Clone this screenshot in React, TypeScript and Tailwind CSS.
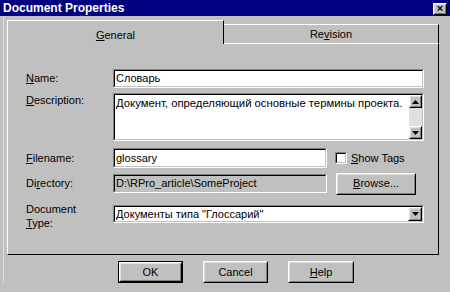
import React from "react";

const font = { fontFamily: '"Liberation Sans", Arial, sans-serif' };

function U({ children }: { children: React.ReactNode }) {
  return <span className="underline underline-offset-[1px]">{children}</span>;
}

function Sunken({ className = "", children }: { className?: string; children?: React.ReactNode }) {
  return (
    <div className={"border border-t-[#808080] border-l-[#808080] border-b-white border-r-white " + className}>
      <div className="h-full w-full border border-t-black border-l-black border-b-[#c0c0c0] border-r-[#c0c0c0] flex items-center">
        {children}
      </div>
    </div>
  );
}

function Raised({ className = "", children }: { className?: string; children?: React.ReactNode }) {
  return (
    <div className={"border border-t-white border-l-white border-b-black border-r-black bg-[#c0c0c0] " + className}>
      <div className="h-full w-full border border-t-[#dfdfdf] border-l-[#dfdfdf] border-b-[#808080] border-r-[#808080] flex items-center justify-center">
        {children}
      </div>
    </div>
  );
}

function Arrow({ down }: { down?: boolean }) {
  return (
    <svg width="7" height="4" viewBox="0 0 7 4">
      {down ? <polygon points="0,0 7,0 3.5,4" fill="#000" /> : <polygon points="0,4 7,4 3.5,0" fill="#000" />}
    </svg>
  );
}

export default function App() {
  return (
    <div className="w-[450px] h-[292px] bg-[#c0c0c0] overflow-hidden text-[11px] text-black leading-none" style={font}>
      {/* title bar */}
      <div className="h-[16px] bg-[#000080] flex items-center justify-between pl-[3px] pr-[3px]">
        <span className="text-white font-bold text-[12px]">Document Properties</span>
        <Raised className="w-[14px] h-[12px] mt-[1px]">
          <span className="text-[11px] font-bold leading-none">×</span>
        </Raised>
      </div>
      <div className="border-l border-l-[#dfdfdf] ml-[3px] pl-[3px] pr-[10px] pt-[4px]">
        {/* tabs */}
        <div className="flex h-[24px]">
          <div className="w-[217px] h-[24px] border-t border-l border-t-white border-l-white border-r border-r-black flex items-center justify-center pt-[5px]">
            <span><U>G</U>eneral</span>
          </div>
          <div className="w-[215px] h-[20px] mt-[4px] border-t border-t-white border-b border-b-white border-r border-r-black flex items-center justify-center pt-[1px]">
            <span>Re<U>v</U>ision</span>
          </div>
        </div>
        {/* panel */}
        <div className="w-[432px] h-[211px] border-l border-l-white border-r border-r-black border-b border-b-black pl-[18px] pt-[25px]">
          {/* Name */}
          <div className="flex items-center h-[19px]">
            <div className="w-[87px]"><U>N</U>ame:</div>
            <Sunken className="w-[311px] h-[19px] bg-white">
              <span className="pl-[1px]">Словарь</span>
            </Sunken>
          </div>
          {/* Description */}
          <div className="flex mt-[5px] h-[48px]">
            <div className="w-[87px] pt-[2px]"><U>D</U>escription:</div>
            <Sunken className="w-[311px] h-[48px] bg-white">
              <div className="flex h-full w-full">
                <div className="flex-1 pl-[1px] pt-[3px] text-[11.3px] whitespace-nowrap">Документ, определяющий основные термины проекта.</div>
                <div className="w-[13px] h-full flex flex-col bg-[#e0e0e0]">
                  <Raised className="w-[13px] h-[13px]"><Arrow /></Raised>
                  <div className="flex-1" />
                  <Raised className="w-[13px] h-[13px]"><Arrow down /></Raised>
                </div>
              </div>
            </Sunken>
          </div>
          {/* Filename */}
          <div className="flex items-center mt-[7px] h-[20px]">
            <div className="w-[87px]"><U>F</U>ilename:</div>
            <Sunken className="w-[214px] h-[20px] bg-white">
              <span className="pl-[1px]">glossary</span>
            </Sunken>
            <div className="ml-[8px] flex items-center">
              <Sunken className="w-[12px] h-[12px] bg-white" />
              <span className="ml-[4px]"><U>S</U>how Tags</span>
            </div>
          </div>
          {/* Directory */}
          <div className="flex items-center mt-[6px] h-[19px]">
            <div className="w-[87px]">Di<U>r</U>ectory:</div>
            <Sunken className="w-[214px] h-[19px]">
              <span className="pl-[1px]">D:\RPro_article\SomeProject</span>
            </Sunken>
            <Raised className="ml-[9px] w-[80px] h-[22px]">
              <span><U>B</U>rowse...</span>
            </Raised>
          </div>
          {/* Document Type */}
          <div className="flex items-center mt-[12px] h-[18px]">
            <div className="w-[87px] leading-[14px] mt-[3px]">Document<br /><U>T</U>ype:</div>
            <Sunken className="w-[311px] h-[18px] bg-white">
              <div className="flex w-full h-full items-center">
                <span className="flex-1 pl-[1px]">Документы типа "Глоссарий"</span>
                <Raised className="w-[14px] h-full"><Arrow down /></Raised>
              </div>
            </Sunken>
          </div>
        </div>
        {/* buttons */}
        <div className="flex mt-[6px] pl-[111px] gap-[20px]">
          <div className="border border-black">
            <Raised className="w-[63px] h-[20px]"><span>OK</span></Raised>
          </div>
          <Raised className="w-[65px] h-[22px]"><span>Cancel</span></Raised>
          <Raised className="w-[66px] h-[22px]"><span><U>H</U>elp</span></Raised>
        </div>
      </div>
    </div>
  );
}
